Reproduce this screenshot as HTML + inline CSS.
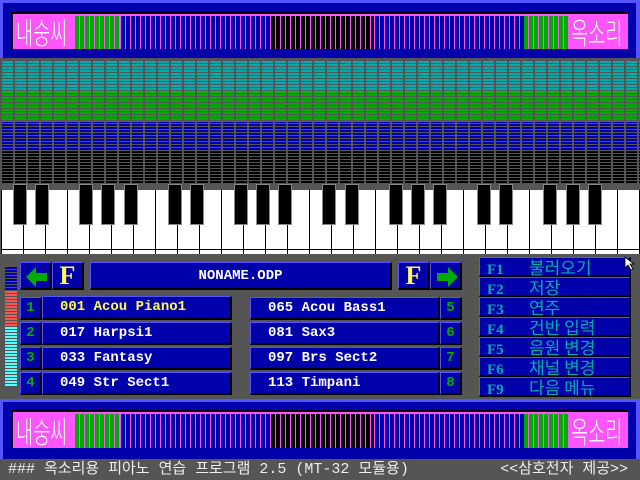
<!DOCTYPE html>
<html><head><meta charset="utf-8"><style>
*{margin:0;padding:0;box-sizing:border-box}
body{width:640px;height:480px;background:#555;position:relative;overflow:hidden;font-family:"Liberation Mono","Noto Sans CJK KR",monospace}
.a{position:absolute}
.ban{background:#0000aa;border-top:3px solid #5555ff;border-right:4px solid #5555ff}
.strip{background:#ff55ff;border-left:2px solid #000;border-top:2px solid #000}
.bars{position:absolute;top:2px;bottom:0}
.blu{background:repeating-linear-gradient(90deg,#ff55ff 0 1px,#0000aa 1px 5px)}
.blk{background:repeating-linear-gradient(90deg,#ff55ff 0 1px,#000 1px 5px)}
.grn{background:repeating-linear-gradient(90deg,#00aa00 0 4px,#ff55ff 4px 5px)}
.logo{color:#fff;font-size:30px;line-height:34px;font-family:"Noto Sans CJK KR",sans-serif;font-weight:300;letter-spacing:0;transform:scaleX(0.62);transform-origin:0 0;white-space:nowrap}
.btn{background:#0000aa;border-top:1px solid #5555ff;border-left:1px solid #5555ff;border-right:2px solid #000;border-bottom:2px solid #000}
.nm{color:#fff;font-weight:bold;font-size:14px;line-height:20px;padding-left:17px}
.num{color:#00aa00;font-weight:bold;font-size:14px;line-height:20px;text-align:center}
.m{color:#00aaaa;font-size:13px;line-height:17px;padding-left:7px;background:#0000aa;border-top:1px solid #5555ff;border-left:1px solid #5555ff;border-right:2px solid #000;border-bottom:2px solid #000}
.m b{display:inline-block;width:42px;font-family:"Liberation Serif",serif;font-weight:bold;font-size:15px}
.m span{font-family:"Noto Sans CJK KR",sans-serif;font-size:17px}
</style></head><body>
<!-- top banner -->
<div class="a ban" style="left:0;top:0;width:640px;height:58px;border-left:3px solid #5555ff"></div>
<div class="a strip" style="left:11px;top:12px;width:617px;height:37px">
 <div class="bars grn" style="left:62px;width:45px"></div>
 <div class="bars blu" style="left:107px;width:150px"></div>
 <div class="bars blk" style="left:257px;width:104px"></div>
 <div class="bars blu" style="left:361px;width:150px"></div>
 <div class="bars grn" style="left:511px;width:45px"></div>
 <div class="a logo" style="left:3px;top:0">내숭씨</div>
 <div class="a logo" style="left:558px;top:0">옥소리</div>
</div>
<!-- grid -->
<div class="a" style="left:0;top:61px;width:640px;height:122px;background:
 repeating-linear-gradient(90deg,#555 0 2px,transparent 2px 13px),
 linear-gradient(#00aaaa 0 31px,#00aa00 31px 61px,#0000aa 61px 91px,#000 91px 122px)"></div>
<div class="a" style="left:0;top:61px;width:640px;height:122px;background:repeating-linear-gradient(180deg,transparent 0 2px,#555 2px 3px)"></div>
<!-- piano -->
<div class="a" style="left:0;top:183px;width:640px;height:72px;background:#555"></div>
<div class="a" style="left:1px;top:190px;width:639px;height:64px;background:
 linear-gradient(transparent 0 59px,#000 59px 60px,transparent 60px),
 repeating-linear-gradient(90deg,#000 0 1px,#fff 1px 22px)"></div>
<div id="bk"></div>
<script>
var p=[0,1,3,4,5],s='';
for(var o=0;o<5;o++)for(var i=0;i<5;i++){var x=13+(o*7+p[i])*22.1;if(x>630)continue;
s+='<div class="a" style="left:'+x.toFixed(0)+'px;top:184px;width:14px;height:41px;background:#000;border:1px solid #888"><div style="margin:2px 1px;height:31px;background:#000"></div></div>';}
document.getElementById('bk').innerHTML=s;
</script>
<!-- level meter -->
<div class="a" style="left:5px;top:267px;width:12px;height:120px;background:
 repeating-linear-gradient(180deg,transparent 0 2px,#555 2px 3px),
 linear-gradient(#0000aa 0 24px,#ff5555 24px 60px,#55ffff 60px)"></div>
<!-- controls -->
<div class="a btn" style="left:20px;top:262px;width:32px;height:28px"><svg width="28" height="24" style="margin:2px"><path d="M3 12 L13 2 L13 8 L24 8 L24 16 L13 16 L13 22Z" fill="#00aa00"/></svg></div>
<div class="a btn" style="left:52px;top:262px;width:32px;height:28px;color:#ffff55;font:bold 26px/26px 'Liberation Serif',serif;text-align:center">F</div>
<div class="a btn" style="left:90px;top:262px;width:302px;height:28px;color:#fff;font-weight:bold;font-size:14px;line-height:26px;text-align:center">NONAME.ODP</div>
<div class="a btn" style="left:398px;top:262px;width:32px;height:28px;color:#ffff55;font:bold 26px/26px 'Liberation Serif',serif;text-align:center">F</div>
<div class="a btn" style="left:430px;top:262px;width:32px;height:28px"><svg width="28" height="24" style="margin:2px"><path d="M25 12 L15 2 L15 8 L4 8 L4 16 L15 16 L15 22Z" fill="#00aa00"/></svg></div>
<!-- instrument rows -->
<div class="a btn num" style="left:20px;top:297px;width:22px;height:23px">1</div>
<div class="a btn nm" style="left:42px;top:296px;width:190px;height:24px;color:#ffff55">001 Acou Piano1</div>
<div class="a btn num" style="left:20px;top:322px;width:22px;height:23px">2</div>
<div class="a btn nm" style="left:42px;top:322px;width:190px;height:23px">017 Harpsi1</div>
<div class="a btn num" style="left:20px;top:347px;width:22px;height:23px">3</div>
<div class="a btn nm" style="left:42px;top:347px;width:190px;height:23px">033 Fantasy</div>
<div class="a btn num" style="left:20px;top:372px;width:22px;height:23px">4</div>
<div class="a btn nm" style="left:42px;top:372px;width:190px;height:23px">049 Str Sect1</div>
<div class="a btn nm" style="left:250px;top:297px;width:190px;height:23px">065 Acou Bass1</div>
<div class="a btn num" style="left:440px;top:297px;width:22px;height:23px">5</div>
<div class="a btn nm" style="left:250px;top:322px;width:190px;height:23px">081 Sax3</div>
<div class="a btn num" style="left:440px;top:322px;width:22px;height:23px">6</div>
<div class="a btn nm" style="left:250px;top:347px;width:190px;height:23px">097 Brs Sect2</div>
<div class="a btn num" style="left:440px;top:347px;width:22px;height:23px">7</div>
<div class="a btn nm" style="left:250px;top:372px;width:190px;height:23px">113 Timpani</div>
<div class="a btn num" style="left:440px;top:372px;width:22px;height:23px">8</div>
<!-- menu -->
<div class="a m" style="left:479px;top:257px;width:152px;height:20px"><b>F1</b><span>불러오기</span></div>
<div class="a m" style="left:479px;top:277px;width:152px;height:20px"><b>F2</b><span>저장</span></div>
<div class="a m" style="left:479px;top:297px;width:152px;height:20px"><b>F3</b><span>연주</span></div>
<div class="a m" style="left:479px;top:317px;width:152px;height:20px"><b>F4</b><span>건반 입력</span></div>
<div class="a m" style="left:479px;top:337px;width:152px;height:20px"><b>F5</b><span>음원 변경</span></div>
<div class="a m" style="left:479px;top:357px;width:152px;height:20px"><b>F6</b><span>채널 변경</span></div>
<div class="a m" style="left:479px;top:377px;width:152px;height:20px"><b>F9</b><span>다음 메뉴</span></div>
<svg class="a" style="left:624px;top:256px" width="12" height="16"><path d="M1 1 L1 12 L4 9 L7 14 L9 13 L6 8 L10 8Z" fill="#fff" stroke="#000" stroke-width="0.8"/></svg>
<!-- bottom banner -->
<div class="a ban" style="left:0;top:399px;width:640px;height:60px;border-left:3px solid #5555ff"></div>
<div class="a strip" style="left:11px;top:410px;width:617px;height:38px">
 <div class="bars grn" style="left:62px;width:45px"></div>
 <div class="bars blu" style="left:107px;width:150px"></div>
 <div class="bars blk" style="left:257px;width:104px"></div>
 <div class="bars blu" style="left:361px;width:150px"></div>
 <div class="bars grn" style="left:511px;width:45px"></div>
 <div class="a logo" style="left:3px;top:1px">내숭씨</div>
 <div class="a logo" style="left:558px;top:1px">옥소리</div>
</div>
<!-- footer -->
<div class="a" style="left:8px;top:460px;color:#eee;font-size:15px;line-height:20px;white-space:pre">### 옥소리용 피아노 연습 프로그램 2.5 (MT-32 모듈용)</div>
<div class="a" style="right:12px;top:460px;color:#eee;font-size:15px;line-height:20px;white-space:pre">&lt;&lt;삼호전자 제공&gt;&gt;</div>
</body></html>
